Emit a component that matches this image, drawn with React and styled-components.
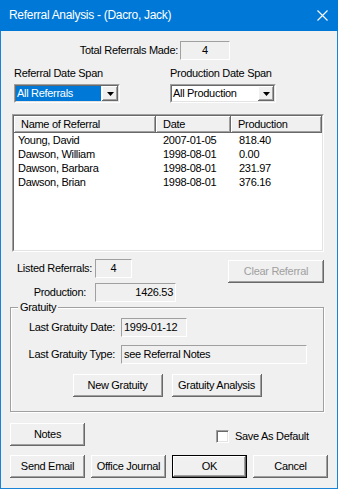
import React from "react";
import styled, { createGlobalStyle, css } from "styled-components";

const GlobalStyle = createGlobalStyle`
  html, body { margin: 0; padding: 0; background: #ffffff; }
  body { font-family: "Liberation Sans", Arial, sans-serif; font-size: 11px; }
  * { box-sizing: border-box; }
`;

const raised = css`
  background: #f0f0f0;
  box-shadow: inset -1px -1px #696969, inset 1px 1px #ffffff,
    inset -2px -2px #a0a0a0, inset 2px 2px #f0f0f0;
`;

const Frame = styled.div`
  width: 338px;
  height: 489px;
  display: flex;
  flex-direction: column;
`;

const TitleBar = styled.div`
  height: 31px;
  flex: none;
  background: #0078d7;
  color: #ffffff;
  display: flex;
  align-items: center;
  padding: 0 10px 1px 9px;
  font-size: 12px;
  letter-spacing: -0.3px;
`;

const Title = styled.div`
  flex: 1;
`;

const Client = styled.div`
  flex: 1;
  background: #f0f0f0;
  border: 1px solid #1883d7;
  border-top: none;
  display: flex;
  flex-direction: column;
  color: #000000;
  letter-spacing: -0.3px;
`;

const Row = styled.div`
  display: flex;
  align-items: flex-start;
  margin-top: ${(p) => p.$top || 0}px;
  padding-left: ${(p) => p.$left || 0}px;
  gap: ${(p) => p.$gap || 0}px;
`;

const FieldLabel = styled.div`
  width: ${(p) => p.$w}px;
  height: 19px;
  line-height: 19px;
  text-align: right;
  padding-right: ${(p) => p.$pad || 3}px;
  white-space: nowrap;
`;

const StaticBox = styled.div`
  width: ${(p) => p.$w}px;
  height: 19px;
  border: 1px solid;
  border-color: #a0a0a0 #ffffff #ffffff #a0a0a0;
  display: flex;
  align-items: center;
  justify-content: ${(p) => p.$align || "flex-start"};
  padding: 0 2px 1px 2px;
  white-space: nowrap;
`;

const SpanGrid = styled.div`
  display: grid;
  grid-template-columns: 156px 106px;
  margin: 7px 0 0 13px;
`;

const SpanLabel = styled.div`
  line-height: 13px;
  margin-bottom: 4px;
`;

const Sunken = styled.div`
  border: 1px solid;
  border-color: #a0a0a0 #ffffff #ffffff #a0a0a0;
  width: ${(p) => p.$w}px;
  height: ${(p) => p.$h}px;
`;

const SunkenInner = styled.div`
  border: 1px solid;
  border-color: #696969 #e3e3e3 #e3e3e3 #696969;
  height: 100%;
  background: #ffffff;
  display: flex;
  flex-direction: ${(p) => (p.$col ? "column" : "row")};
  overflow: hidden;
`;

const ComboValue = styled.div`
  flex: 1;
  margin-right: 1px;
  padding-left: 1px;
  line-height: 15px;
  background: ${(p) => (p.$selected ? "#0078d7" : "#ffffff")};
  color: ${(p) => (p.$selected ? "#ffffff" : "#000000")};
`;

const DropButton = styled.div`
  ${raised};
  width: 16px;
  height: 15px;
  display: flex;
  align-items: center;
  justify-content: center;
`;

const ListHeader = styled.div`
  display: flex;
  height: 17px;
  flex: none;
`;

const HeadCell = styled.div`
  ${raised};
  width: ${(p) => p.$w}px;
  padding-left: 7px;
  line-height: 16px;
`;

const ListRow = styled.div`
  display: flex;
  height: 14px;
  line-height: 14px;
`;

const Cell = styled.div`
  width: ${(p) => p.$w}px;
  padding-left: ${(p) => p.$pad}px;
  white-space: nowrap;
`;

const Button = styled.button`
  ${raised};
  width: ${(p) => p.$w}px;
  height: 23px;
  border: none;
  padding: 0 0 1px 0;
  font-family: "Liberation Sans", Arial, sans-serif;
  font-size: 11px;
  letter-spacing: -0.3px;
  color: ${(p) => (p.disabled ? "#a0a0a0" : "#000000")};
  margin-top: ${(p) => p.$top || 0}px;
  margin-left: ${(p) => p.$ml || 0}px;
  ${(p) =>
    p.$default &&
    css`
      box-shadow: inset 0 0 0 1px #000000, inset -2px -2px #696969,
        inset 2px 2px #ffffff, inset -3px -3px #a0a0a0;
    `}
`;

const GroupBox = styled.div`
  position: relative;
  margin: 5px 0 0 9px;
  width: 314px;
  border: 1px solid #a0a0a0;
  box-shadow: inset 1px 1px #ffffff, 1px 1px #ffffff;
  padding: 10px 0 14px 0;
`;

const GroupTitle = styled.div`
  position: absolute;
  top: -7px;
  left: 7px;
  padding: 0 2px;
  line-height: 13px;
  background: #f0f0f0;
`;

const GroupButtons = styled.div`
  display: flex;
  justify-content: center;
  gap: 9px;
  margin-top: 10px;
`;

const CheckWrap = styled.label`
  display: flex;
  align-items: center;
  gap: 6px;
  margin: 7px 0 0 131px;
  line-height: 13px;
`;

const CheckBox = styled.span`
  width: 13px;
  height: 13px;
  background: #ffffff;
  border: 1px solid;
  border-color: #a0a0a0 #ffffff #ffffff #a0a0a0;
  box-shadow: inset 1px 1px #696969, inset -1px -1px #e3e3e3;
`;

const Arrow = () => (
  <svg width="7" height="4" viewBox="0 0 7 4">
    <polygon points="0,0 7,0 3.5,4" fill="#000" />
  </svg>
);

const Combo = ({ value, selected }) => (
  <Sunken $w={106} $h={19}>
    <SunkenInner>
      <ComboValue $selected={selected}>{value}</ComboValue>
      <DropButton>
        <Arrow />
      </DropButton>
    </SunkenInner>
  </Sunken>
);

const referrals = [
  { name: "Young, David", date: "2007-01-05", prod: "818.40" },
  { name: "Dawson, William", date: "1998-08-01", prod: "0.00" },
  { name: "Dawson, Barbara", date: "1998-08-01", prod: "231.97" },
  { name: "Dawson, Brian", date: "1998-08-01", prod: "376.16" },
];

export default function App() {
  return (
    <Frame>
      <GlobalStyle />
      <TitleBar>
        <Title>Referral Analysis - (Dacro, Jack)</Title>
        <svg width="11" height="11" viewBox="0 0 11 11">
          <path d="M0.5 0.5 L10.5 10.5 M10.5 0.5 L0.5 10.5" stroke="#fff" strokeWidth="1.1" />
        </svg>
      </TitleBar>
      <Client>
        <Row $top={10}>
          <FieldLabel $w={179} $pad={2}>Total Referrals Made:</FieldLabel>
          <StaticBox $w={50} $align="center">4</StaticBox>
        </Row>

        <SpanGrid>
          <div>
            <SpanLabel>Referral Date Span</SpanLabel>
            <Combo value="All Referrals" selected />
          </div>
          <div>
            <SpanLabel>Production Date Span</SpanLabel>
            <Combo value="All Production" />
          </div>
        </SpanGrid>

        <Row $top={11} $left={11}>
          <Sunken $w={312} $h={138}>
            <SunkenInner $col>
              <ListHeader>
                <HeadCell $w={142}>Name of Referral</HeadCell>
                <HeadCell $w={75}>Date</HeadCell>
                <HeadCell $w={91}>Production</HeadCell>
              </ListHeader>
              {referrals.map((r) => (
                <ListRow key={r.name}>
                  <Cell $w={142} $pad={4}>{r.name}</Cell>
                  <Cell $w={75} $pad={7}>{r.date}</Cell>
                  <Cell $w={91} $pad={8}>{r.prod}</Cell>
                </ListRow>
              ))}
            </SunkenInner>
          </Sunken>
        </Row>

        <Row $top={7}>
          <FieldLabel $w={94}>Listed Referrals:</FieldLabel>
          <StaticBox $w={37} $align="center">4</StaticBox>
          <Button $w={96} $top={1} $ml={96} disabled>
            Clear Referral
          </Button>
        </Row>
        <Row>
          <FieldLabel $w={94} $pad={9}>Production:</FieldLabel>
          <StaticBox $w={81} $align="flex-end">1426.53</StaticBox>
        </Row>

        <GroupBox>
          <GroupTitle>Gratuity</GroupTitle>
          <Row>
            <FieldLabel $w={110} $pad={6}>Last Gratuity Date:</FieldLabel>
            <StaticBox $w={66}>1999-01-12</StaticBox>
          </Row>
          <Row $top={8}>
            <FieldLabel $w={110} $pad={6}>Last Gratuity Type:</FieldLabel>
            <StaticBox $w={186}>see Referral Notes</StaticBox>
          </Row>
          <GroupButtons>
            <Button $w={90}>New Gratuity</Button>
            <Button $w={90}>Gratuity Analysis</Button>
          </GroupButtons>
        </GroupBox>

        <Row $top={11} $left={9}>
          <Button $w={75}>Notes</Button>
          <CheckWrap>
            <CheckBox />
            Save As Default
          </CheckWrap>
        </Row>

        <Row $top={9} $left={9} $gap={6}>
          <Button $w={75}>Send Email</Button>
          <Button $w={75}>Office Journal</Button>
          <Button $w={75} $default>
            OK
          </Button>
          <Button $w={75}>Cancel</Button>
        </Row>
      </Client>
    </Frame>
  );
}
